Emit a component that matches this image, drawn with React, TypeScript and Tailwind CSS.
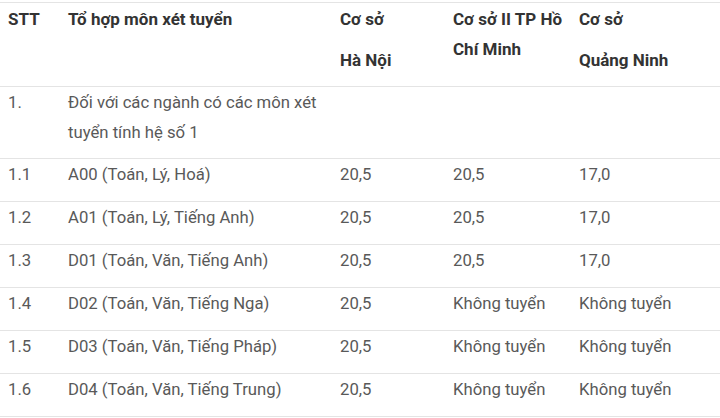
import React from 'react';

type Row = { stt: string; to: React.ReactNode; hn: string; hcm: string; qn: string; first?: boolean };

const rows: Row[] = [
  { stt: '1.', to: <>Đối với các ngành có các môn xét<br />tuyển tính hệ số 1</>, hn: '', hcm: '', qn: '', first: true },
  { stt: '1.1', to: 'A00 (Toán, Lý, Hoá)', hn: '20,5', hcm: '20,5', qn: '17,0' },
  { stt: '1.2', to: 'A01 (Toán, Lý, Tiếng Anh)', hn: '20,5', hcm: '20,5', qn: '17,0' },
  { stt: '1.3', to: 'D01 (Toán, Văn, Tiếng Anh)', hn: '20,5', hcm: '20,5', qn: '17,0' },
  { stt: '1.4', to: 'D02 (Toán, Văn, Tiếng Nga)', hn: '20,5', hcm: 'Không tuyển', qn: 'Không tuyển' },
  { stt: '1.5', to: 'D03 (Toán, Văn, Tiếng Pháp)', hn: '20,5', hcm: 'Không tuyển', qn: 'Không tuyển' },
  { stt: '1.6', to: 'D04 (Toán, Văn, Tiếng Trung)', hn: '20,5', hcm: 'Không tuyển', qn: 'Không tuyển' },
];

const grid = 'grid grid-cols-[60px_272px_113px_126px_149px] border-b border-[#e4e4e4]';
const cell = 'pl-2 pt-px leading-[30px] whitespace-nowrap';

export default function App() {
  return (
    <div className="w-[720px] h-[418px] bg-white pt-[2px] font-['Roboto',sans-serif] overflow-hidden">
      <div className="border-t border-[#e4e4e4]">
        <div className={`${grid} text-[17px] font-bold text-[#333]`}>
          <div className={`${cell} pb-[11px]`}>STT</div>
          <div className={`${cell} pb-[11px]`}>Tổ hợp môn xét tuyển</div>
          <div className={`${cell} pb-[11px]`}>
            <p>Cơ sở</p>
            <p className="mt-[11px]">Hà Nội</p>
          </div>
          <div className={`${cell} pb-[11px]`}>
            Cơ sở II TP Hồ<br />Chí Minh
          </div>
          <div className={`${cell} pb-[11px]`}>
            <p>Cơ sở</p>
            <p className="mt-[11px]">Quảng Ninh</p>
          </div>
        </div>
        {rows.map((r) => {
          const c = `${cell} ${r.first ? 'pb-[10px]' : 'pb-[11px]'}`;
          return (
            <div key={r.stt} className={`${grid} text-[16.7px] text-[#595959]`}>
              <div className={c}>{r.stt}</div>
              <div className={c}>{r.to}</div>
              <div className={c}>{r.hn}</div>
              <div className={c}>{r.hcm}</div>
              <div className={c}>{r.qn}</div>
            </div>
          );
        })}
      </div>
    </div>
  );
}
